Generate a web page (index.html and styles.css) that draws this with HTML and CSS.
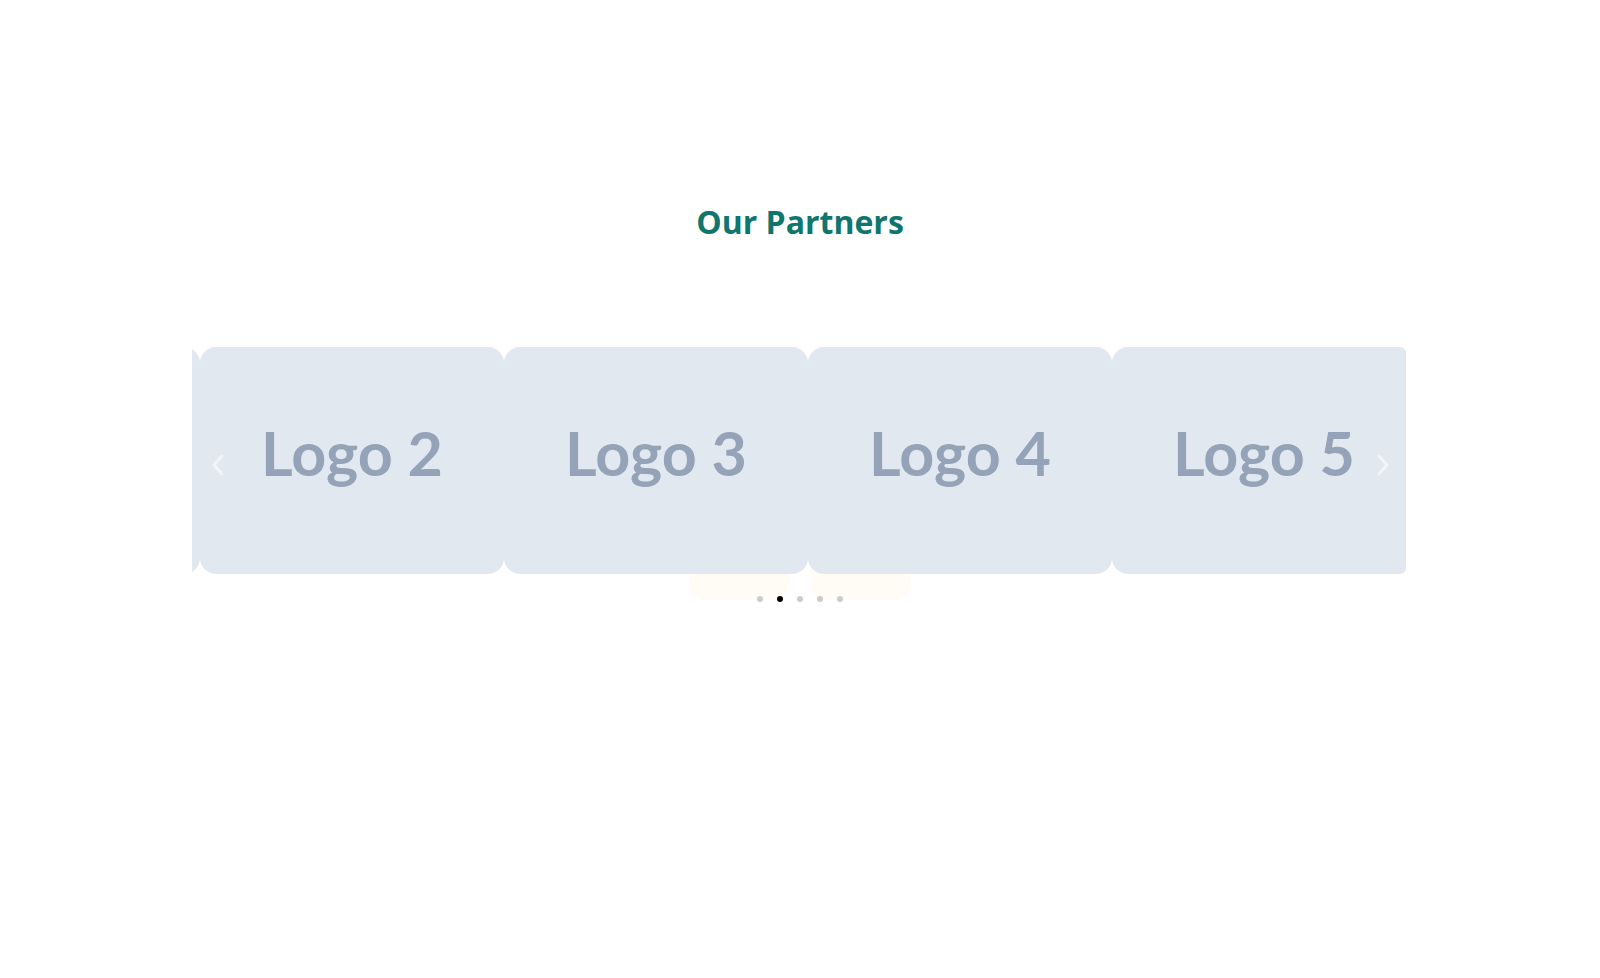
FILE: index.html
```html
<!DOCTYPE html>
<html lang="en">
<head>
    <meta charset="UTF-8">
    <meta name="viewport" content="width=device-width, initial-scale=1.0">
    <title>Our Partners</title>
    <link rel="stylesheet" href="styles.css">
</head>
<body>
    <section class="partners">
        <h2>Our Partners</h2>

        <div class="carousel">
            <!-- soft backdrop tiles peeking out under the slides -->
            <div class="backdrop">
                <span></span>
                <span></span>
            </div>

            <div class="viewport">
                <div class="track">
                    <div class="slide"><div class="logo">Logo 1</div></div>
                    <div class="slide"><div class="logo">Logo 2</div></div>
                    <div class="slide"><div class="logo">Logo 3</div></div>
                    <div class="slide"><div class="logo">Logo 4</div></div>
                    <div class="slide"><div class="logo">Logo 5</div></div>
                </div>
            </div>

            <button class="arrow prev" aria-label="Previous">
                <svg width="12" height="22" viewBox="0 0 12 22"><polyline points="10,2 2,11 10,20" /></svg>
            </button>
            <button class="arrow next" aria-label="Next">
                <svg width="12" height="22" viewBox="0 0 12 22"><polyline points="2,2 10,11 2,20" /></svg>
            </button>

            <div class="dots">
                <span></span>
                <span class="active"></span>
                <span></span>
                <span></span>
                <span></span>
            </div>
        </div>
    </section>
</body>
</html>
```

FILE: styles.css
```css
body {
    margin: 0;
    background: #fff;
    font-family: Lato, "Noto Sans", sans-serif;
}
.partners {
    padding-top: 202px;
    min-height: 776px;
}
.partners h2 {
    margin: 0 0 105px;
    text-align: center;
    font-family: "Open Sans", Lato, sans-serif;
    font-size: 32px;
    line-height: 40px;
    font-weight: 700;
    color: #0f766e;
}
.carousel {
    position: relative;
    width: 1216px;
    margin: 0 auto;
}
.viewport {
    position: relative;
    z-index: 1;
    overflow: hidden;
    margin-right: 2px;
    border-radius: 0 6px 6px 0;
}
.track {
    display: flex;
    transform: translateX(-296px);
}
.slide {
    flex: 0 0 304px;
}
.logo {
    height: 211px;
    padding-bottom: 16px;
    display: flex;
    align-items: center;
    justify-content: center;
    background: #e2e8f0;
    border-radius: 16px;
    font-size: 61px;
    font-weight: 700;
    color: #94a3b8;
}
.backdrop {
    position: absolute;
    left: 497px;
    top: 180px;
    display: flex;
    gap: 22px;
}
.backdrop span {
    width: 100px;
    height: 73px;
    background: #fefcf5;
    border-radius: 16px;
}
.arrow {
    position: absolute;
    top: 107px;
    z-index: 2;
    background: none;
    border: none;
    padding: 0;
    cursor: pointer;
}
.arrow.prev { left: 20px; }
.arrow.next { right: 19px; }
.arrow polyline {
    fill: none;
    stroke: rgba(255, 255, 255, 0.55);
    stroke-width: 3;
    stroke-linecap: round;
    stroke-linejoin: round;
}
.dots {
    position: relative;
    z-index: 1;
    display: flex;
    justify-content: center;
    gap: 14px;
    margin-top: 22px;
}
.dots span {
    width: 6px;
    height: 6px;
    border-radius: 50%;
    background: #ccc;
}
.dots span.active {
    background: #000;
}
```
